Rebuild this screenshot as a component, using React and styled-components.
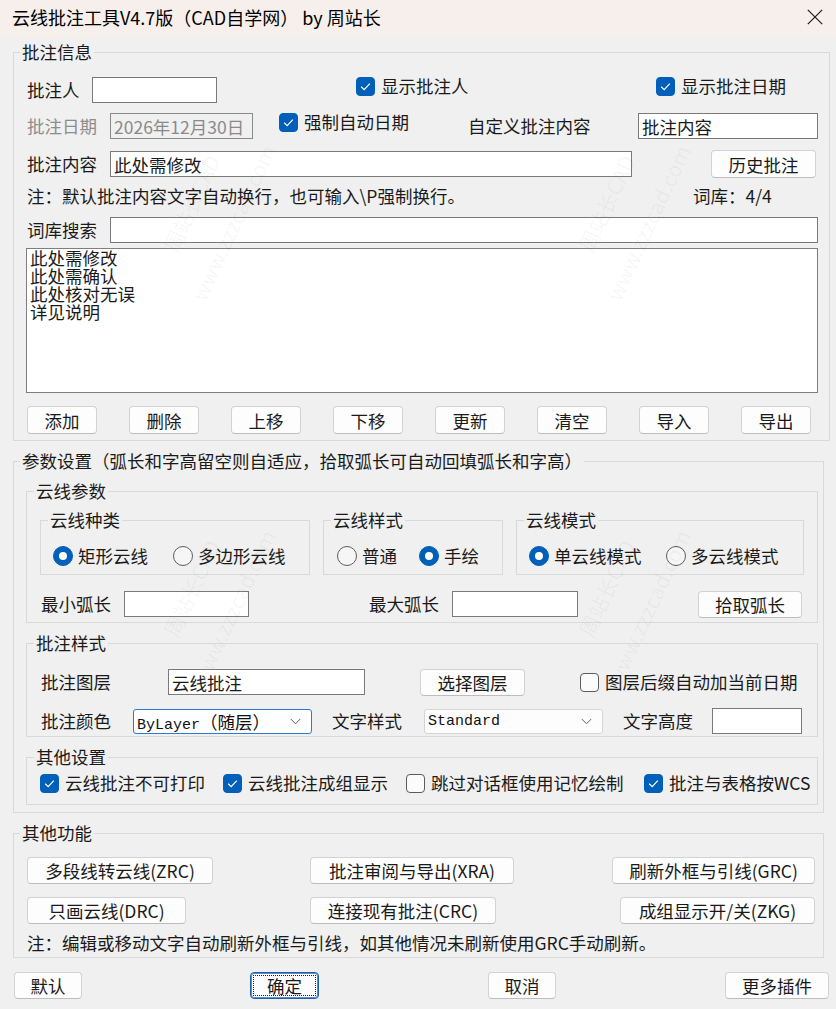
import React from 'react';
import styled, { createGlobalStyle } from 'styled-components';

const FONT = `"Noto Sans CJK SC", "Noto Sans", sans-serif`;
const MONO = `"Liberation Mono", "Noto Sans CJK SC", monospace`;

const GlobalStyle = createGlobalStyle`
  html, body { margin: 0; padding: 0; background: #f0f0f0; }
  body { font-family: ${FONT}; color: #1a1a1a; }
  #root { width: 836px; height: 1009px; }
  *, *::before, *::after { box-sizing: border-box; }
`;

const Window = styled.div`
  position: relative;
  width: 836px;
  height: 1009px;
  overflow: hidden;
  background: #f0f0f0;
  font-family: ${FONT};
  font-size: 17.5px;
  color: #1a1a1a;
`;

const TitleBar = styled.div`
  height: 38px;
  background: #f7efeb;
  display: flex;
  align-items: center;
  justify-content: space-between;
  padding: 0 13px 4px 12px;
`;

const TitleText = styled.div`
  font-size: 18px;
  line-height: 22px;
  color: #000;
  white-space: nowrap;
`;

const CloseButton = styled.div`
  width: 16px;
  height: 16px;
  display: flex;
`;

const Content = styled.div`
  padding: 4px 0 0 13px;
`;

const Group = styled.fieldset`
  margin: ${p => p.$mt || 0}px 0 0 ${p => p.$ml || 0}px;
  padding: 0;
  width: ${p => p.$w}px;
  min-width: 0;
  border: 1px solid #d9d9d9;
  flex: none;
`;

const Legend = styled.legend`
  margin-left: ${p => p.$ml}px;
  padding: 0 2px;
  font-size: 17.5px;
  line-height: 20px;
  color: #1a1a1a;
  white-space: nowrap;
`;

const GroupBody = styled.div`
  padding: 0 0 ${p => p.$pb || 0}px ${p => p.$pl || 0}px;
`;

const Row = styled.div`
  display: flex;
  align-items: center;
  height: ${p => p.$h}px;
  margin-top: ${p => p.$mt || 0}px;
  gap: ${p => p.$gap || 0}px;
`;

const SubGroupRow = styled.div`
  display: flex;
  gap: 13px;
  margin-top: ${p => p.$mt || 0}px;
`;

const Label = styled.span`
  flex: none;
  width: ${p => (p.$w ? `${p.$w}px` : 'auto')};
  margin-left: ${p => p.$ml || 0}px;
  color: ${p => (p.$muted ? '#8d8d8d' : '#1a1a1a')};
  white-space: nowrap;
  line-height: 20px;
`;

const TextField = styled.input`
  flex: none;
  width: ${p => p.$w}px;
  height: 26px;
  margin: 0 0 0 ${p => p.$ml || 0}px;
  padding: 0 3px;
  border: 1px solid ${p => (p.$muted ? '#8a8a8a' : '#7a7a7a')};
  border-radius: 0;
  background: ${p => (p.$muted ? '#f0f0f0' : '#ffffff')};
  color: ${p => (p.$muted ? '#8a8a8a' : '#1a1a1a')};
  font-family: ${FONT};
  font-size: 17.5px;
  outline: none;
`;

const PushButton = styled.button`
  position: relative;
  flex: none;
  width: ${p => p.$w}px;
  height: ${p => p.$h || 28}px;
  margin: 0 0 0 ${p => p.$ml || 0}px;
  padding: 0;
  display: flex;
  align-items: center;
  justify-content: center;
  font-family: ${FONT};
  font-size: 17.5px;
  color: #1a1a1a;
  white-space: nowrap;
  background: #fdfdfd;
  border: 1px solid ${p => (p.$primary ? '#1d5fa8' : '#d2d2d2')};
  border-bottom-color: ${p => (p.$primary ? '#1d5fa8' : '#bdbdbd')};
  box-shadow: ${p => (p.$primary ? 'inset 0 0 0 1px #5b8fcf' : 'none')};
  border-radius: 4px;
  cursor: default;
  &::after {
    content: '';
    display: ${p => (p.$primary ? 'block' : 'none')};
    position: absolute;
    inset: 2px;
    border: 1px dotted #222;
  }
`;

const CheckItem = styled.label`
  flex: none;
  display: flex;
  align-items: center;
  gap: 6px;
  width: ${p => (p.$w ? `${p.$w}px` : 'auto')};
  height: 20px;
  margin-left: ${p => p.$ml || 0}px;
  align-self: ${p => (p.$top ? 'flex-start' : 'center')};
  white-space: nowrap;
  line-height: 20px;
`;

const Box = styled.span`
  flex: none;
  width: 19px;
  height: 19px;
  border-radius: 4px;
  display: flex;
  align-items: center;
  justify-content: center;
  background: ${p => (p.$on ? '#005fb8' : '#fbfbfb')};
  border: 1px solid ${p => (p.$on ? '#005fb8' : '#5c5c5c')};
`;

const RadioItem = styled.label`
  flex: none;
  display: flex;
  align-items: center;
  gap: 5px;
  width: ${p => (p.$w ? `${p.$w}px` : 'auto')};
  white-space: nowrap;
  line-height: 20px;
`;

const RadioDot = styled.span`
  flex: none;
  width: 20px;
  height: 20px;
  border-radius: 50%;
  display: flex;
  align-items: center;
  justify-content: center;
  background: ${p => (p.$on ? '#005fb8' : '#f6f6f6')};
  border: 1px solid ${p => (p.$on ? '#005fb8' : '#5c5c5c')};
  &::after {
    content: '';
    display: ${p => (p.$on ? 'block' : 'none')};
    width: 8px;
    height: 8px;
    border-radius: 50%;
    background: #ffffff;
  }
`;

const ComboBox = styled.div`
  flex: none;
  width: ${p => p.$w}px;
  height: 25px;
  margin-left: ${p => p.$ml || 0}px;
  display: flex;
  align-items: center;
  justify-content: space-between;
  padding: 0 10px 0 3px;
  background: ${p => (p.$focus ? '#ffffff' : '#fdfdfd')};
  border: 1px solid ${p => (p.$focus ? '#2a7bd4' : '#d5d5d5')};
  border-radius: 3px;
  font-family: ${MONO};
  font-size: 15px;
  color: #111;
  white-space: nowrap;
`;

const ComboCJK = styled.span`
  font-family: ${FONT};
  font-size: 17.5px;
`;

const ListBox = styled.div`
  width: 792px;
  height: 145px;
  margin: 4px 0 0 -1px;
  padding: 0 3px;
  background: #ffffff;
  border: 1px solid #7e7e7e;
`;

const ListItem = styled.div`
  height: 18px;
  line-height: 18px;
  font-size: 17.5px;
  white-space: nowrap;
`;

const Watermarks = styled.div`
  position: absolute;
  inset: 0;
  pointer-events: none;
  z-index: 5;
`;

const Mark = styled.div`
  position: absolute;
  left: ${p => p.$x}px;
  top: ${p => p.$y}px;
  transform: translate(-50%, -50%) rotate(-65deg);
  font-family: ${FONT};
  font-size: 21px;
  line-height: 46px;
  text-align: center;
  color: rgba(0, 0, 0, 0.045);
  white-space: nowrap;
`;

const Check = () => (
  <svg width="13" height="13" viewBox="0 0 13 13">
    <path d="M2.2 6.8 L5.2 9.6 L10.8 3.6" fill="none" stroke="#ffffff" strokeWidth="1.2" />
  </svg>
);

const Chevron = () => (
  <svg width="11" height="7" viewBox="0 0 11 7">
    <path d="M0.8 1 L5.5 5.8 L10.2 1" fill="none" stroke="#606060" strokeWidth="1" />
  </svg>
);

const CheckOpt = ({ on, children, ...rest }) => (
  <CheckItem {...rest}>
    <Box $on={on}>{on && <Check />}</Box>
    {children}
  </CheckItem>
);

const RadioOpt = ({ on, children, ...rest }) => (
  <RadioItem {...rest}>
    <RadioDot $on={on} />
    {children}
  </RadioItem>
);

const listItems = ['此处需修改', '此处需确认', '此处核对无误', '详见说明'];
const editButtons = ['添加', '删除', '上移', '下移', '更新', '清空', '导入', '导出'];
const marks = [
  [212, 213], [627, 213],
  [212, 598], [627, 598],
];

export default function App() {
  return (
    <Window>
      <GlobalStyle />
      <TitleBar>
        <TitleText>云线批注工具V4.7版（CAD自学网） by 周站长</TitleText>
        <CloseButton>
          <svg width="16" height="16" viewBox="0 0 16 16">
            <path d="M0.8 0.8 L15.2 15.2 M15.2 0.8 L0.8 15.2" stroke="#1a1a1a" strokeWidth="1.2" fill="none" />
          </svg>
        </CloseButton>
      </TitleBar>

      <Content>
        {/* 批注信息 */}
        <Group $w={817}>
          <Legend $ml={6}>批注信息</Legend>
          <GroupBody $pl={13} $pb={6}>
            <Row $mt={14} $h={28}>
              <Label $w={65}>批注人</Label>
              <TextField $w={125} defaultValue="" />
              <CheckOpt on $top $ml={139} $w={300}>显示批注人</CheckOpt>
              <CheckOpt on $top>显示批注日期</CheckOpt>
            </Row>
            <Row $mt={8} $h={28}>
              <Label $w={83} $muted>批注日期</Label>
              <TextField $w={143} $muted defaultValue="2026年12月30日" />
              <CheckOpt on $top $ml={26} $w={189}>强制自动日期</CheckOpt>
              <Label $w={170}>自定义批注内容</Label>
              <TextField $w={180} defaultValue="批注内容" />
            </Row>
            <Row $mt={10} $h={28}>
              <Label $w={83}>批注内容</Label>
              <TextField $w={522} defaultValue="此处需修改" />
              <PushButton $ml={79} $w={105} $h={28}>历史批注</PushButton>
            </Row>
            <Row $mt={6} $h={24}>
              <Label $w={666}>注：默认批注内容文字自动换行，也可输入\P强制换行。</Label>
              <Label>词库：4/4</Label>
            </Row>
            <Row $mt={8} $h={28}>
              <Label $w={83}>词库搜索</Label>
              <TextField $w={708} defaultValue="" />
            </Row>
            <ListBox>
              {listItems.map(t => (
                <ListItem key={t}>{t}</ListItem>
              ))}
            </ListBox>
            <Row $mt={13} $h={28} $gap={32}>
              {editButtons.map(t => (
                <PushButton key={t} $w={70} $h={28}>{t}</PushButton>
              ))}
            </Row>
          </GroupBody>
        </Group>

        {/* 参数设置 */}
        <Group $w={811} $mt={10}>
          <Legend $ml={6}>参数设置（弧长和字高留空则自适应，拾取弧长可自动回填弧长和字高）</Legend>
          <GroupBody $pl={12} $pb={7}>
            <Group $w={792} $mt={10}>
              <Legend $ml={7}>云线参数</Legend>
              <GroupBody $pl={13} $pb={3}>
                <SubGroupRow $mt={9}>
                  <Group $w={270}>
                    <Legend $ml={7}>云线种类</Legend>
                    <GroupBody $pl={12} $pb={6}>
                      <Row $mt={14} $h={24}>
                        <RadioOpt on $w={120}>矩形云线</RadioOpt>
                        <RadioOpt>多边形云线</RadioOpt>
                      </Row>
                    </GroupBody>
                  </Group>
                  <Group $w={180}>
                    <Legend $ml={7}>云线样式</Legend>
                    <GroupBody $pl={13} $pb={6}>
                      <Row $mt={14} $h={24}>
                        <RadioOpt $w={82}>普通</RadioOpt>
                        <RadioOpt on>手绘</RadioOpt>
                      </Row>
                    </GroupBody>
                  </Group>
                  <Group $w={288}>
                    <Legend $ml={7}>云线模式</Legend>
                    <GroupBody $pl={12} $pb={6}>
                      <Row $mt={14} $h={24}>
                        <RadioOpt on $w={137}>单云线模式</RadioOpt>
                        <RadioOpt>多云线模式</RadioOpt>
                      </Row>
                    </GroupBody>
                  </Group>
                </SubGroupRow>
                <Row $mt={14} $h={30}>
                  <Label $ml={1} $w={83}>最小弧长</Label>
                  <TextField $w={125} defaultValue="" />
                  <Label $ml={120} $w={83}>最大弧长</Label>
                  <TextField $w={126} defaultValue="" />
                  <PushButton $ml={120} $w={104} $h={27}>拾取弧长</PushButton>
                </Row>
              </GroupBody>
            </Group>

            <Group $w={792} $mt={10}>
              <Legend $ml={7}>批注样式</Legend>
              <GroupBody $pl={13} $pb={1}>
                <Row $mt={14} $h={30}>
                  <Label $ml={1} $w={127}>批注图层</Label>
                  <TextField $w={197} defaultValue="云线批注" />
                  <PushButton $ml={55} $w={105} $h={27}>选择图层</PushButton>
                  <CheckOpt $ml={55}>图层后缀自动加当前日期</CheckOpt>
                </Row>
                <Row $mt={10} $h={28}>
                  <Label $ml={1} $w={92}>批注颜色</Label>
                  <ComboBox $w={179} $focus>
                    <span>ByLayer<ComboCJK>（随层）</ComboCJK></span>
                    <Chevron />
                  </ComboBox>
                  <Label $ml={20} $w={92}>文字样式</Label>
                  <ComboBox $w={179}>
                    <span>Standard</span>
                    <Chevron />
                  </ComboBox>
                  <Label $ml={20} $w={89}>文字高度</Label>
                  <TextField $w={90} defaultValue="" />
                </Row>
              </GroupBody>
            </Group>

            <Group $w={792} $mt={10}>
              <Legend $ml={7}>其他设置</Legend>
              <GroupBody $pl={13} $pb={9}>
                <Row $mt={4} $h={24}>
                  <CheckOpt on $w={183}>云线批注不可打印</CheckOpt>
                  <CheckOpt on $w={183}>云线批注成组显示</CheckOpt>
                  <CheckOpt $w={238}>跳过对话框使用记忆绘制</CheckOpt>
                  <CheckOpt on>批注与表格按WCS</CheckOpt>
                </Row>
              </GroupBody>
            </Group>
          </GroupBody>
        </Group>

        {/* 其他功能 */}
        <Group $w={811} $mt={10}>
          <Legend $ml={6}>其他功能</Legend>
          <GroupBody $pl={13} $pb={3}>
            <Row $mt={14} $h={27}>
              <PushButton $w={186} $h={27}>多段线转云线(ZRC)</PushButton>
              <PushButton $ml={97} $w={204} $h={27}>批注审阅与导出(XRA)</PushButton>
              <PushButton $ml={98} $w={203} $h={27}>刷新外框与引线(GRC)</PushButton>
            </Row>
            <Row $mt={13} $h={27}>
              <PushButton $w={159} $h={27}>只画云线(DRC)</PushButton>
              <PushButton $ml={124} $w={186} $h={27}>连接现有批注(CRC)</PushButton>
              <PushButton $ml={124} $w={195} $h={27}>成组显示开/关(ZKG)</PushButton>
            </Row>
            <Row $mt={8} $h={22}>
              <Label>注：编辑或移动文字自动刷新外框与引线，如其他情况未刷新使用GRC手动刷新。</Label>
            </Row>
          </GroupBody>
        </Group>

        <Row $mt={14} $h={27}>
          <PushButton $ml={1} $w={68} $h={27}>默认</PushButton>
          <PushButton $ml={168} $w={69} $h={27} $primary>确定</PushButton>
          <PushButton $ml={169} $w={68} $h={27}>取消</PushButton>
          <PushButton $ml={169} $w={104} $h={27}>更多插件</PushButton>
        </Row>
      </Content>

      <Watermarks>
        {marks.map(([x, y]) => (
          <Mark key={`${x}-${y}`} $x={x} $y={y}>
            周站长CAD
            <br />
            www.zzzcad.com
          </Mark>
        ))}
      </Watermarks>
    </Window>
  );
}
